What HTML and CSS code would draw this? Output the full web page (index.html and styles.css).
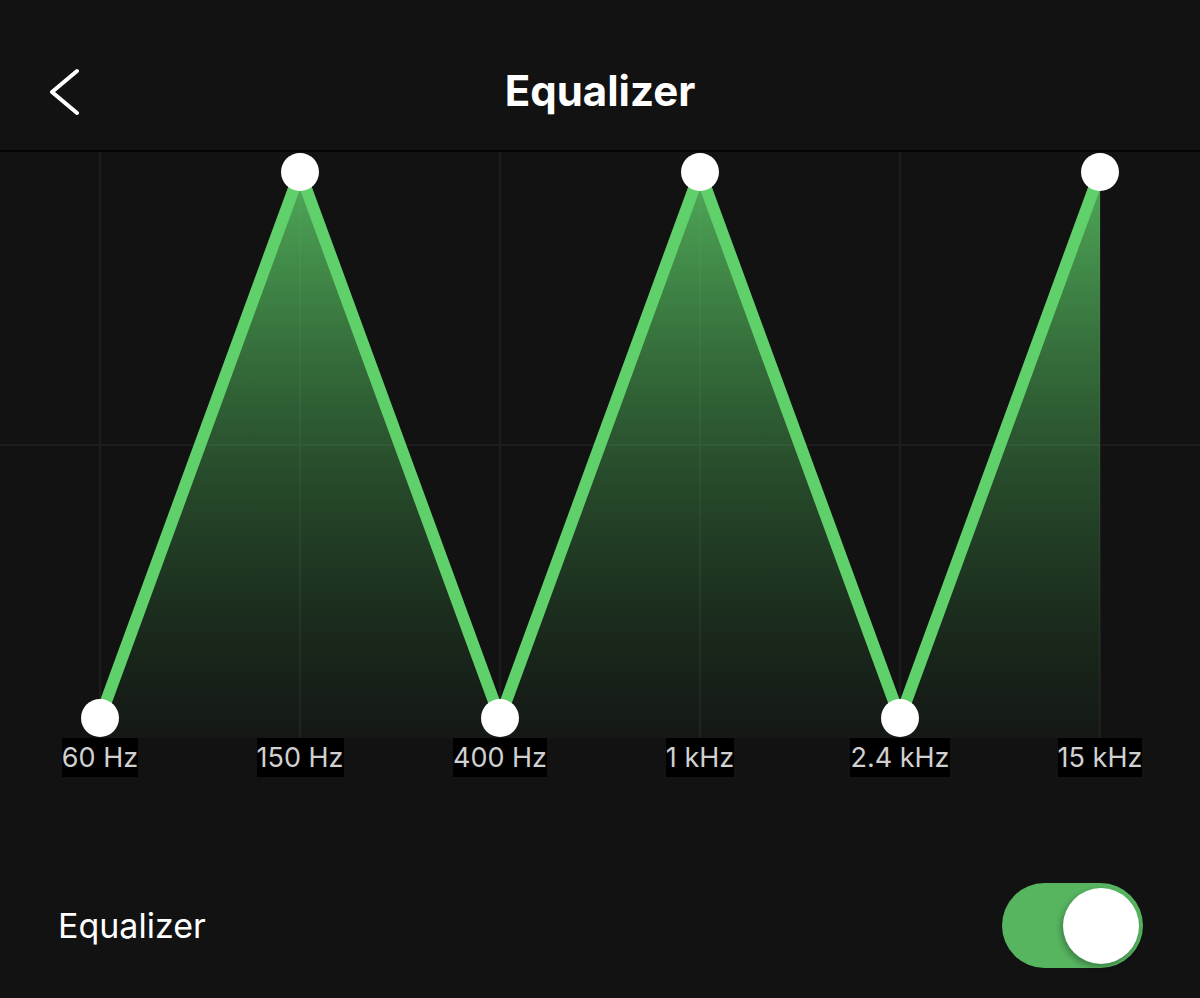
FILE: index.html
```html
<!DOCTYPE html>
<html lang="en">
<head>
<meta charset="UTF-8">
<meta name="viewport" content="width=device-width, initial-scale=1.0">
<title>Equalizer</title>
<link rel="stylesheet" href="styles.css">
</head>
<body>

<div class="screen">
    <!-- Top bar with back button -->
    <header class="topbar">
        <button class="back" aria-label="Back">
            <svg width="40" height="60" viewBox="0 0 40 60">
                <path d="M27 11 L2 32 L27 53" fill="none" stroke="#fff" stroke-width="4" stroke-linecap="round" stroke-linejoin="round"/>
            </svg>
        </button>
        <h1 class="title">Equalizer</h1>
    </header>

    <!-- Band graph -->
    <div class="graph">
        <svg class="graph-svg" width="1200" height="586" viewBox="0 0 1200 586">
            <defs>
                <linearGradient id="bandFill" x1="0" y1="0" x2="0" y2="1">
                    <stop offset="0" stop-color="#5fd06a" stop-opacity="0.8"/>
                    <stop offset="0.5" stop-color="#4fb65a" stop-opacity="0.38"/>
                    <stop offset="1" stop-color="#3a8a44" stop-opacity="0.05"/>
                </linearGradient>
            </defs>
            <g stroke="#1d1d1d" stroke-width="2">
                <line x1="100" y1="0" x2="100" y2="586"/>
                <line x1="300" y1="0" x2="300" y2="586"/>
                <line x1="500" y1="0" x2="500" y2="586"/>
                <line x1="700" y1="0" x2="700" y2="586"/>
                <line x1="900" y1="0" x2="900" y2="586"/>
                <line x1="1100" y1="0" x2="1100" y2="586"/>
                <line x1="0" y1="293" x2="1200" y2="293"/>
            </g>
            <polygon fill="url(#bandFill)" points="100,566 300,20 500,566 700,20 900,566 1100,20 1100,586 100,586"/>
            <polyline fill="none" stroke="#5fd06a" stroke-width="12" stroke-linejoin="round" points="100,566 300,20 500,566 700,20 900,566 1100,20"/>
            <g fill="#fff">
                <circle cx="100" cy="566" r="19"/>
                <circle cx="300" cy="20" r="19"/>
                <circle cx="500" cy="566" r="19"/>
                <circle cx="700" cy="20" r="19"/>
                <circle cx="900" cy="566" r="19"/>
                <circle cx="1100" cy="20" r="19"/>
            </g>
        </svg>
        <div class="bands">
            <span class="band"><span>60 Hz</span></span>
            <span class="band"><span>150 Hz</span></span>
            <span class="band"><span>400 Hz</span></span>
            <span class="band"><span>1 kHz</span></span>
            <span class="band"><span>2.4 kHz</span></span>
            <span class="band"><span>15 kHz</span></span>
        </div>
    </div>

    <!-- On/off setting -->
    <div class="setting">
        <span class="setting-label">Equalizer</span>
        <div class="switch on"><div class="knob"></div></div>
    </div>
</div>

</body>
</html>
```

FILE: styles.css
```css
body {
    margin: 0;
    background-color: #121212;
    font-family: "Inter", "Noto Sans", sans-serif;
    color: #fff;
}

.screen {
    width: 1200px;
    height: 998px;
    overflow: hidden;
}

.topbar {
    height: 152px;
    padding-top: 32px;
    box-sizing: border-box;
    border-bottom: 2px solid #050505;
    display: flex;
    align-items: center;
    justify-content: center;
    position: relative;
}

.back {
    position: absolute;
    left: 50px;
    top: 60px;
    padding: 0;
    border: none;
    background: none;
    line-height: 0;
    cursor: pointer;
}

.title {
    margin: 0;
    font-size: 42px;
    font-weight: 700;
    line-height: 1;
}

.graph-svg {
    display: block;
}

.bands {
    display: grid;
    grid-template-columns: repeat(6, 200px);
    height: 40px;
}

.band {
    text-align: center;
}

.band span {
    display: inline-block;
    background-color: #000;
    color: #d0d0d0;
    font-size: 27px;
    line-height: 39px;
}

.setting {
    margin-top: 105px;
    padding: 0 57px 0 58px;
    display: flex;
    align-items: center;
    justify-content: space-between;
}

.setting-label {
    font-size: 34px;
}

.switch {
    width: 141px;
    height: 85px;
    border-radius: 43px;
    background-color: #57b560;
    display: flex;
    align-items: center;
    justify-content: flex-end;
    padding: 0 4px;
    box-sizing: border-box;
}

.knob {
    width: 76px;
    height: 76px;
    border-radius: 50%;
    background-color: #fff;
    box-shadow: -2px 3px 6px rgba(0, 0, 0, 0.3);
}
```
